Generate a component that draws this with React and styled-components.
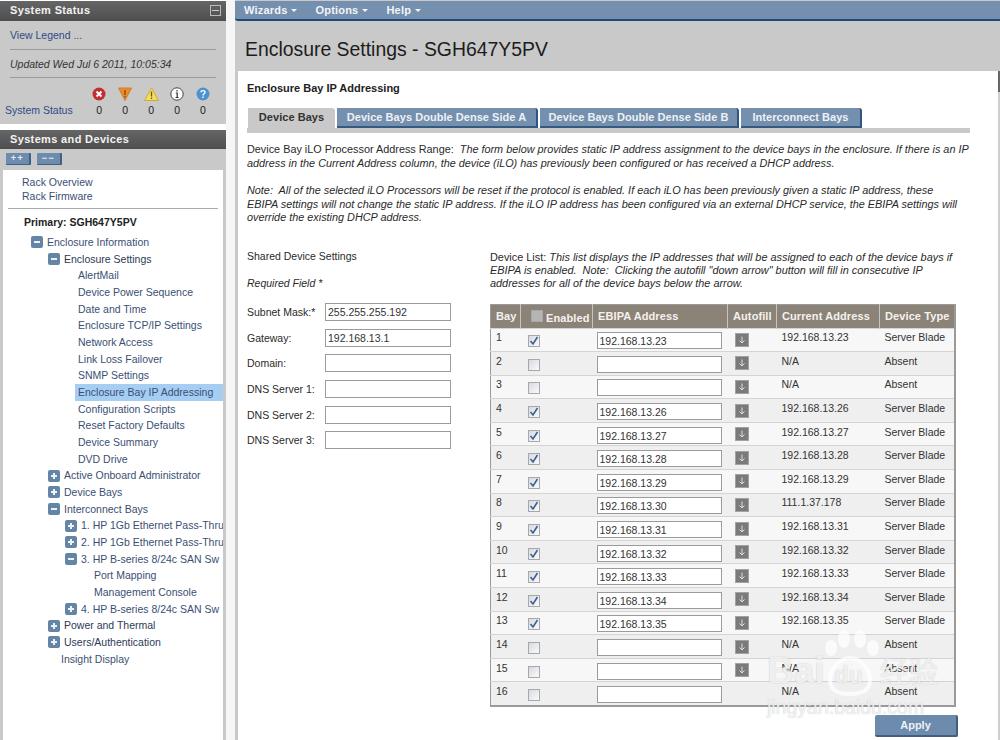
import styled, { createGlobalStyle } from 'styled-components'

const Global = createGlobalStyle`
  html, body { margin: 0; padding: 0; background: #fff; }
  body { font-family: "Liberation Sans", Arial, sans-serif; color: #222; }
  * { box-sizing: border-box; }
`

const Page = styled.div`
  width: 1000px;
  height: 740px;
  overflow: hidden;
  display: flex;
  position: relative;
  background: #f6f6f6;
`

const Sidebar = styled.aside`
  width: 226px;
  height: 740px;
  flex: none;
  display: flex;
  flex-direction: column;
  background: #fff;
`

const PanelHeader = styled.div`
  height: ${p => p.$h}px;
  flex: none;
  margin-top: ${p => p.$top}px;
  background: linear-gradient(#666, #4e4e4e);
  color: #f2f2f2;
  font-size: 11px;
  font-weight: bold;
  letter-spacing: 0.35px;
  padding: 0 5px 2px 10px;
  display: flex;
  align-items: center;
  justify-content: space-between;
`

const Collapse = styled.span`
  width: 11px;
  height: 11px;
  border: 1px solid #bbb;
  position: relative;
  &::after {
    content: '';
    position: absolute;
    left: 1px;
    right: 1px;
    top: 4px;
    height: 1px;
    background: #ccc;
  }
`

const StatusPanel = styled.div`
  height: 103px;
  flex: none;
  background: #c9c9c9;
  padding: 0 10px;
  font-size: 10.5px;
  line-height: 12px;
`

const LegendLink = styled.div`
  height: 29px;
  padding-top: 8px;
  color: #2f4a86;
  border-bottom: 1px solid #9a9a9a;
`

const Updated = styled.div`
  height: 28px;
  padding-top: 8px;
  font-style: italic;
  color: #333;
  border-bottom: 1px solid #9a9a9a;
`

const StatusGrid = styled.div`
  display: flex;
  margin: 9px 0 0 -5px;
`

const StatusName = styled.div`
  width: 82px;
  padding-top: 17px;
  color: #2f4a86;
`

const StatusCell = styled.div`
  width: 26.2px;
  display: flex;
  flex-direction: column;
  align-items: center;
  gap: 3px;
  color: #222;
`

const DevicesPanel = styled.div`
  flex: 1;
  background: #c9c9c9;
  padding: 4px 3px 0;
  display: flex;
  flex-direction: column;
`

const ExpandBar = styled.div`
  display: flex;
  gap: 6px;
  padding-left: 3px;
  height: 17px;
  flex: none;
`

const ExpandButton = styled.div`
  width: 25px;
  height: 12px;
  background: #6d8cad;
  border-right: 2px solid #3f5f83;
  border-bottom: 1px solid #3f5f83;
  border-radius: 1px;
  color: #e6edf5;
  font-size: 9px;
  font-weight: bold;
  line-height: 10px;
  letter-spacing: 1.5px;
  text-align: center;
`

const TreeBox = styled.div`
  flex: 1;
  background: #fff;
  overflow: hidden;
  font-size: 10.5px;
  color: #3a4a68;
`

const RackLinks = styled.div`
  margin: 6px 5px 0 5px;
  padding: 0 0 5px 14px;
  border-bottom: 1px solid #aaa;
  line-height: 13.5px;
  color: #3a4f74;
`

const Primary = styled.div`
  font-weight: bold;
  color: #222;
  padding-left: 21px;
  margin-top: 7px;
  height: 18px;
  line-height: 13px;
`

const TreeRow = styled.div`
  height: 16.68px;
  line-height: 16.68px;
  padding-left: ${p => p.$indent}px;
  display: flex;
  align-items: center;
  gap: 4px;
  white-space: nowrap;
  background: ${p => (p.$active ? '#a6cdf2' : 'transparent')};
  margin-left: ${p => (p.$active ? 72 : 0)}px;
  color: ${p => (p.$dark ? '#2c3a55' : '#3a4f74')};
`

const TreeToggle = styled.span`
  width: 12px;
  height: 12px;
  flex: none;
  border-radius: 2px;
  background: #6585a6;
  position: relative;
  &::before {
    content: '';
    position: absolute;
    left: 3px;
    right: 3px;
    top: 5px;
    height: 2px;
    background: #eef2f6;
  }
  &::after {
    content: '';
    display: ${p => (p.$open ? 'none' : 'block')};
    position: absolute;
    top: 3px;
    bottom: 3px;
    left: 5px;
    width: 2px;
    background: #eef2f6;
  }
`

const Main = styled.main`
  margin-left: 9px;
  width: 765px;
  height: 740px;
  flex: none;
  display: flex;
  flex-direction: column;
  background: #c9c9c9;
  padding-top: 1px;
`

const MenuBar = styled.nav`
  height: 20px;
  flex: none;
  background: #7490ae;
  border-bottom: 2px solid #1e4a78;
  border-radius: 0 0 0 3px;
  display: flex;
  gap: 18px;
  padding-left: 9px;
  align-items: center;
  color: #f2f4f7;
  font-size: 11px;
  font-weight: bold;
  letter-spacing: 0.2px;
`

const MenuItem = styled.span`
  display: flex;
  align-items: center;
  gap: 4px;
  &::after {
    content: '';
    border-left: 3px solid transparent;
    border-right: 3px solid transparent;
    border-top: 3px solid #f2f4f7;
    margin-top: 1px;
  }
`

const TitleBar = styled.div`
  height: 50px;
  flex: none;
  padding: 16px 0 0 10px;
  font-size: 19.4px;
  line-height: 24px;
  color: #1c1c1c;
`

const Content = styled.div`
  flex: 1;
  margin-left: 3px;
  background: #fff;
  padding: 11px 0 0 9px;
  font-size: 10.5px;
  color: #2a2a2a;
  border-right: 2px solid #cfcfcf;
  position: relative;
  &::after {
    content: '';
    position: absolute;
    right: -2px;
    top: 0;
    width: 2px;
    height: 21px;
    background: #666;
  }
`

const SectionTitle = styled.h1`
  margin: 0;
  font-size: 11px;
  line-height: 13px;
  font-weight: bold;
  color: #222;
`

const Tabs = styled.div`
  margin-top: 13px;
  width: 723px;
  height: 25px;
  border-bottom: 5px solid #c9c9c9;
  display: flex;
  gap: 2px;
  padding-left: 1px;
`

const Tab = styled.div`
  width: ${p => p.$w}px;
  height: 20px;
  text-align: center;
  font-size: 11px;
  font-weight: bold;
  line-height: 18px;
  letter-spacing: 0.04px;
  background: ${p => (p.$active ? '#c9c9c9' : '#7490ae')};
  color: ${p => (p.$active ? '#333' : '#eef1f5')};
  border-right: ${p => (p.$active ? '0' : '2px solid #2f567f')};
  border-bottom: ${p => (p.$active ? '0' : '2px solid #35597f')};
  border-top-right-radius: 3px;
`

const Note = styled.p`
  margin: ${p => p.$top}px 0 0;
  width: 735px;
  font-size: 10.85px;
  line-height: 13.5px;
  em { font-style: italic; }
`

const FormArea = styled.div`
  display: flex;
  margin-top: 23px;
`

const SharedColumn = styled.div`
  width: 243px;
  flex: none;
`

const SharedTitle = styled.div`
  height: 27px;
  line-height: 17px;
`

const Required = styled.div`
  height: 25px;
  font-style: italic;
  line-height: 17px;
`

const FormRow = styled.div`
  display: flex;
  align-items: center;
  height: 25.6px;
  label { width: 78px; flex: none; }
`

const TextInput = styled.div`
  width: 126px;
  height: 18px;
  border: 1px solid #9b9b9b;
  background: #fff;
  padding-left: 2px;
  line-height: 16px;
  font-size: 10.5px;
  color: #333;
`

const DeviceColumn = styled.div`
  flex: 1;
`

const DeviceNote = styled.p`
  margin: 3px 0 0;
  width: 475px;
  font-size: 10.9px;
  line-height: 13px;
`

const BayTable = styled.table`
  margin-top: 14px;
  width: 466px;
  border-collapse: collapse;
  table-layout: fixed;
  border: 1px solid #9a9a9a;
  border-bottom-width: 2px;
  border-right-width: 2px;
  th {
    height: 24px;
    background: #8c8378;
    color: #f4f2ee;
    font-size: 11px;
    font-weight: bold;
    text-align: left;
    letter-spacing: 0.1px;
    padding: 0 0 0 5px;
    border-right: 1px solid #c9c4bc;
  }
  th:last-child { border-right: 0; }
  td {
    height: 23.6px;
    padding: 0 0 0 5px;
    border-top: 1px solid #d4d4d4;
    color: #333;
  }
  tr:nth-child(even) td { background: #efefef; }
  tr:nth-child(odd) td { background: #f7f7f7; }
`

const TopText = styled.span`
  display: block;
  margin-top: -5px;
`

const EnabledHead = styled.div`
  display: flex;
  align-items: center;
  gap: 3px;
  padding-left: 5px;
  span { padding-top: 3px; }
`

const Box = styled.span`
  display: flex;
  width: 12px;
  height: 12px;
  margin: ${p => (p.$solid ? '0' : '3px 0 0 2px')};
  border: 1px solid #a8a8a8;
  background: ${p => (p.$solid ? '#b5b5b5' : 'linear-gradient(135deg, #d6dbe2, #fafafa)')};
  align-items: center;
  justify-content: center;
`

const CellInput = styled(TextInput)`
  width: 125px;
  height: 17px;
  margin: 2px 0 0 -1px;
`

const Autofill = styled.span`
  display: flex;
  width: 14px;
  height: 14px;
  margin-left: 2px;
  background: #7a7a7a;
  border: 1px solid #a2a2a2;
  align-items: center;
  justify-content: center;
`

const ApplyRow = styled.div`
  display: flex;
  justify-content: flex-end;
  width: 468px;
  margin-top: 8px;
`

const ApplyButton = styled.button`
  width: 83px;
  height: 22px;
  border: 0;
  border-right: 2px solid #3f5f83;
  border-bottom: 2px solid #3f5f83;
  border-radius: 2px;
  background: #6d8cad;
  color: #eef1f5;
  font: bold 11px "Liberation Sans", Arial, sans-serif;
  padding: 0;
`

const Watermark = styled.div`
  position: absolute;
  left: 767px;
  top: 650px;
  width: 180px;
  color: rgba(255, 255, 255, 0.8);
  text-shadow: 0 0 1px rgba(130, 130, 130, 0.55);
  pointer-events: none;
`

const WatermarkLogo = styled.div`
  display: flex;
  align-items: baseline;
  height: 42px;
  font: bold 37px/42px "Liberation Sans", Arial, sans-serif;
`

const WatermarkDu = styled.span`
  font-size: 23px;
  margin-left: 10px;
`

const WatermarkCjk = styled.span`
  font: 29px/36px "Noto Sans CJK SC", sans-serif;
  margin-left: 17px;
`

const WatermarkUrl = styled.div`
  font: 19.5px/20px "Liberation Sans", Arial, sans-serif;
  margin-top: 5px;
  white-space: nowrap;
`

const Paw = styled.svg`
  position: absolute;
  left: 50px;
  top: -20px;
`

const ErrorIcon = () => (
  <svg width="14" height="14" viewBox="0 0 14 14">
    <circle cx="7" cy="7" r="6.5" fill="#c22f2f" />
    <path d="M4.5 4.5l5 5M9.5 4.5l-5 5" stroke="#fff" strokeWidth="2" />
  </svg>
)

const MajorIcon = () => (
  <svg width="14" height="14" viewBox="0 0 14 14">
    <path d="M0.5 1h13L7 13.5z" fill="#ee8a2c" stroke="#c9812f" />
    <path d="M7 3v5M7 9v1.5" stroke="#8a4a10" strokeWidth="1.4" />
  </svg>
)

const MinorIcon = () => (
  <svg width="15" height="14" viewBox="0 0 15 14">
    <path d="M7.5 0.8L14.5 13.5H0.5z" fill="#f7dc5c" stroke="#c9ad3c" />
    <path d="M7.5 4.5v5M7.5 10.5v1.5" stroke="#6b5a10" strokeWidth="1.3" />
  </svg>
)

const InfoIcon = () => (
  <svg width="14" height="14" viewBox="0 0 14 14">
    <circle cx="7" cy="7" r="6.2" fill="#fff" stroke="#444" />
    <path d="M7 3v1.6M5.8 6H7.2v4.4M5.6 10.5h3" stroke="#333" strokeWidth="1.2" fill="none" />
  </svg>
)

const HelpIcon = () => (
  <svg width="14" height="14" viewBox="0 0 14 14">
    <circle cx="7" cy="7" r="6.5" fill="#4a93cf" />
    <path d="M5 5.3C5 3 9 3 9 5.3 9 6.8 7 6.7 7 8.4M7 9.5v1.6" stroke="#fff" strokeWidth="1.4" fill="none" />
  </svg>
)

const statusIcons = [ErrorIcon, MajorIcon, MinorIcon, InfoIcon, HelpIcon]

const tree = [
  { label: 'Enclosure Information', indent: 28, toggle: 'open' },
  { label: 'Enclosure Settings', indent: 45, toggle: 'open', dark: true },
  { label: 'AlertMail', indent: 75 },
  { label: 'Device Power Sequence', indent: 75 },
  { label: 'Date and Time', indent: 75 },
  { label: 'Enclosure TCP/IP Settings', indent: 75 },
  { label: 'Network Access', indent: 75 },
  { label: 'Link Loss Failover', indent: 75 },
  { label: 'SNMP Settings', indent: 75 },
  { label: 'Enclosure Bay IP Addressing', indent: 3, active: true },
  { label: 'Configuration Scripts', indent: 75 },
  { label: 'Reset Factory Defaults', indent: 75 },
  { label: 'Device Summary', indent: 75 },
  { label: 'DVD Drive', indent: 75 },
  { label: 'Active Onboard Administrator', indent: 45, toggle: 'closed' },
  { label: 'Device Bays', indent: 45, toggle: 'closed' },
  { label: 'Interconnect Bays', indent: 45, toggle: 'open' },
  { label: '1. HP 1Gb Ethernet Pass-Thru', indent: 62, toggle: 'closed' },
  { label: '2. HP 1Gb Ethernet Pass-Thru', indent: 62, toggle: 'closed' },
  { label: '3. HP B-series 8/24c SAN Sw', indent: 62, toggle: 'open' },
  { label: 'Port Mapping', indent: 91 },
  { label: 'Management Console', indent: 91 },
  { label: '4. HP B-series 8/24c SAN Sw', indent: 62, toggle: 'closed' },
  { label: 'Power and Thermal', indent: 45, toggle: 'closed', dark: true },
  { label: 'Users/Authentication', indent: 45, toggle: 'closed', dark: true },
  { label: 'Insight Display', indent: 58 },
]

const tabs = [
  { label: 'Device Bays', w: 87, active: true },
  { label: 'Device Bays Double Dense Side A', w: 201 },
  { label: 'Device Bays Double Dense Side B', w: 199 },
  { label: 'Interconnect Bays', w: 121 },
]

const sharedFields = [
  ['Subnet Mask:*', '255.255.255.192'],
  ['Gateway:', '192.168.13.1'],
  ['Domain:', ''],
  ['DNS Server 1:', ''],
  ['DNS Server 2:', ''],
  ['DNS Server 3:', ''],
]

const bays = [
  [1, '192.168.13.23', '192.168.13.23'],
  [2],
  [3],
  [4, '192.168.13.26', '192.168.13.26'],
  [5, '192.168.13.27', '192.168.13.27'],
  [6, '192.168.13.28', '192.168.13.28'],
  [7, '192.168.13.29', '192.168.13.29'],
  [8, '192.168.13.30', '111.1.37.178'],
  [9, '192.168.13.31', '192.168.13.31'],
  [10, '192.168.13.32', '192.168.13.32'],
  [11, '192.168.13.33', '192.168.13.33'],
  [12, '192.168.13.34', '192.168.13.34'],
  [13, '192.168.13.35', '192.168.13.35'],
  [14],
  [15],
  [16],
]

const Check = () => (
  <svg width="10" height="10" viewBox="0 0 10 10">
    <path d="M1.5 5l2.5 3 4.5-7" stroke="#3d5f96" strokeWidth="1.6" fill="none" />
  </svg>
)

const DownArrow = () => (
  <svg width="10" height="10" viewBox="0 0 10 10">
    <path d="M5 1.5v6.5M2.5 5.5L5 8l2.5-2.5" stroke="#ddd" fill="none" />
  </svg>
)

const App = () => (
  <Page>
    <Global />
    <Sidebar>
      <PanelHeader $top={1} $h={20}>
        System Status
        <Collapse />
      </PanelHeader>
      <StatusPanel>
        <LegendLink>View Legend ...</LegendLink>
        <Updated>Updated Wed Jul 6 2011, 10:05:34</Updated>
        <StatusGrid>
          <StatusName>System Status</StatusName>
          {statusIcons.map((Icon, i) => (
            <StatusCell key={i}>
              <Icon />
              <span>0</span>
            </StatusCell>
          ))}
        </StatusGrid>
      </StatusPanel>
      <PanelHeader $top={6} $h={19}>Systems and Devices</PanelHeader>
      <DevicesPanel>
        <ExpandBar>
          <ExpandButton>++</ExpandButton>
          <ExpandButton>−−</ExpandButton>
        </ExpandBar>
        <TreeBox>
          <RackLinks>
            Rack Overview
            <br />
            Rack Firmware
          </RackLinks>
          <Primary>Primary: SGH647Y5PV</Primary>
          {tree.map(item => (
            <TreeRow key={item.label} $indent={item.indent} $active={item.active} $dark={item.dark}>
              {item.toggle && <TreeToggle $open={item.toggle === 'open'} />}
              <span>{item.label}</span>
            </TreeRow>
          ))}
        </TreeBox>
      </DevicesPanel>
    </Sidebar>
    <Main>
      <MenuBar>
        <MenuItem>Wizards</MenuItem>
        <MenuItem>Options</MenuItem>
        <MenuItem>Help</MenuItem>
      </MenuBar>
      <TitleBar>Enclosure Settings - SGH647Y5PV</TitleBar>
      <Content>
        <SectionTitle>Enclosure Bay IP Addressing</SectionTitle>
        <Tabs>
          {tabs.map(t => (
            <Tab key={t.label} $w={t.w} $active={t.active}>{t.label}</Tab>
          ))}
        </Tabs>
        <Note $top={10}>
          Device Bay iLO Processor Address Range:&nbsp; <em>The form below provides static IP address assignment to the device bays in the enclosure. If there is an IP address in the Current Address column, the device (iLO) has previously been configured or has received a DHCP address.</em>
        </Note>
        <Note $top={14}>
          <em>
            Note:&nbsp; All of the selected iLO Processors will be reset if the protocol is enabled. If each iLO has been previously given a static IP address, these
            <br />
            EBIPA settings will not change the static IP address. If the iLO IP address has been configured via an external DHCP service, the EBIPA settings will
            <br />
            override the existing DHCP address.
          </em>
        </Note>
        <FormArea>
          <SharedColumn>
            <SharedTitle>Shared Device Settings</SharedTitle>
            <Required>Required Field *</Required>
            {sharedFields.map(([label, value]) => (
              <FormRow key={label}>
                <label>{label}</label>
                <TextInput>{value}</TextInput>
              </FormRow>
            ))}
          </SharedColumn>
          <DeviceColumn>
            <DeviceNote>
              Device List: <em>This list displays the IP addresses that will be assigned to each of the device bays if EBIPA is enabled.&nbsp; Note:&nbsp; Clicking the autofill "down arrow" button will fill in consecutive IP addresses for all of the device bays below the arrow.</em>
            </DeviceNote>
            <BayTable>
              <colgroup>
                <col style={{ width: 30 }} />
                <col style={{ width: 72 }} />
                <col style={{ width: 135 }} />
                <col style={{ width: 49 }} />
                <col style={{ width: 103 }} />
                <col />
              </colgroup>
              <thead>
                <tr>
                  <th>Bay</th>
                  <th><EnabledHead><Box $solid /><span>Enabled</span></EnabledHead></th>
                  <th>EBIPA Address</th>
                  <th>Autofill</th>
                  <th>Current Address</th>
                  <th>Device Type</th>
                </tr>
              </thead>
              <tbody>
                {bays.map(([bay, ip, current]) => (
                  <tr key={bay}>
                    <td><TopText>{bay}</TopText></td>
                    <td><Box>{ip && <Check />}</Box></td>
                    <td><CellInput>{ip}</CellInput></td>
                    <td>{bay !== 16 && <Autofill><DownArrow /></Autofill>}</td>
                    <td><TopText>{current || 'N/A'}</TopText></td>
                    <td><TopText>{ip ? 'Server Blade' : 'Absent'}</TopText></td>
                  </tr>
                ))}
              </tbody>
            </BayTable>
            <ApplyRow>
              <ApplyButton>Apply</ApplyButton>
            </ApplyRow>
          </DeviceColumn>
        </FormArea>
      </Content>
    </Main>
    <Watermark>
      <Paw width="70" height="70" viewBox="0 0 70 70" fill="rgba(255,255,255,0.72)">
        <ellipse cx="14" cy="18" rx="6" ry="8" />
        <ellipse cx="27" cy="9" rx="6" ry="9" />
        <ellipse cx="43" cy="9" rx="6" ry="9" />
        <ellipse cx="56" cy="18" rx="6" ry="8" />
        <path d="M33 28c10 0 20 10 20 22 0 10-8 14-20 14s-20-4-20-14c0-12 10-22 20-22z" fill="none" stroke="rgba(255,255,255,0.72)" strokeWidth="4" />
      </Paw>
      <WatermarkLogo>
        Bai
        <WatermarkDu>du</WatermarkDu>
        <WatermarkCjk>经验</WatermarkCjk>
      </WatermarkLogo>
      <WatermarkUrl>jingyan.baidu.com</WatermarkUrl>
    </Watermark>
  </Page>
)

export default App
